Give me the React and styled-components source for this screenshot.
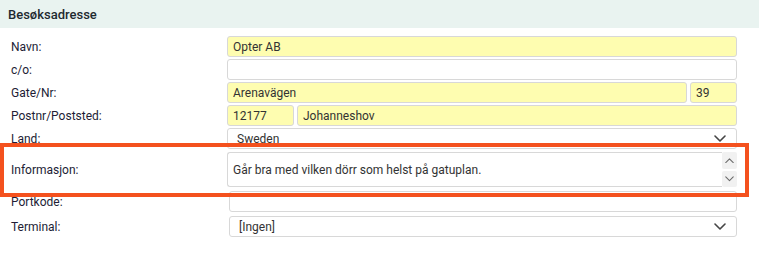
import React from "react";
import styled, { createGlobalStyle } from "styled-components";

const Global = createGlobalStyle`
  body {
    margin: 0;
    background: #ffffff;
    font-family: Roboto, "Liberation Sans", Arial, sans-serif;
  }
`;

const Chevron = ({ up, size = 12, color = "#454545", width = 1.6 }) => (
  <svg width={size} height={size / 2 + 1} viewBox="0 0 12 7" fill="none">
    <path
      d={up ? "M1 6 L6 1 L11 6" : "M1 1 L6 6 L11 1"}
      stroke={color}
      strokeWidth={width}
      strokeLinecap="round"
      strokeLinejoin="round"
    />
  </svg>
);

export default function App() {
  return (
    <Page>
      <Global />
      <Header>Besøksadresse</Header>
      <Form>
        <Row>
          <Label>Navn:</Label>
          <Fields>
            <Input $yellow defaultValue="Opter AB" readOnly />
          </Fields>
        </Row>
        <Row>
          <Label>c/o:</Label>
          <Fields>
            <Input defaultValue="" readOnly />
          </Fields>
        </Row>
        <Row>
          <Label>Gate/Nr:</Label>
          <Fields>
            <Input $yellow defaultValue="Arenavägen" readOnly />
            <Input $yellow $width="47px" defaultValue="39" readOnly />
          </Fields>
        </Row>
        <Row>
          <Label>Postnr/Poststed:</Label>
          <Fields>
            <Input $yellow $width="67px" defaultValue="12177" readOnly />
            <Input $yellow defaultValue="Johanneshov" readOnly />
          </Fields>
        </Row>
        <Row>
          <Label>Land:</Label>
          <Fields>
            <Select>
              <span>Sweden</span>
              <Chevron />
            </Select>
          </Fields>
        </Row>
        <Row $top="3px" $height="35px">
          <Label>Informasjon:</Label>
          <Fields>
            <TextArea>
              <TextBox>Går bra med vilken dörr som helst på gatuplan.</TextBox>
              <ScrollCol>
                <ScrollBtn>
                  <Chevron up size={9} color="#6a6a6a" width={1.4} />
                </ScrollBtn>
                <ScrollBtn>
                  <Chevron size={9} color="#6a6a6a" width={1.4} />
                </ScrollBtn>
              </ScrollCol>
            </TextArea>
          </Fields>
        </Row>
        <Row $top="4px">
          <Label>Portkode:</Label>
          <Fields $shift>
            <Input defaultValue="" readOnly />
          </Fields>
        </Row>
        <Row $top="4px">
          <Label>Terminal:</Label>
          <Fields $shift>
            <Select>
              <span>[Ingen]</span>
              <Chevron />
            </Select>
          </Fields>
        </Row>
        <Highlight />
      </Form>
    </Page>
  );
}

// Layout //
const Page = styled.div`
  width: 759px;
  height: 253px;
  position: relative;
  overflow: hidden;
`;
const Header = styled.div`
  height: 28px;
  background: #e9f3f0;
  padding-left: 8px;
  display: flex;
  align-items: center;
  font-size: 13px;
  font-weight: 500;
  color: #1e2a30;
  box-sizing: border-box;
`;
const Form = styled.div`
  padding-top: 8px;
  padding-right: 22px;
`;
const Row = styled.div`
  display: grid;
  grid-template-columns: 227px 1fr;
  align-items: center;
  height: ${(p) => p.$height || "21px"};
  margin-top: ${(p) => p.$top || "2px"};
  &:first-child {
    margin-top: 0;
  }
`;
const Label = styled.div`
  padding-left: 11px;
  font-size: 12px;
  color: #221d35;
`;
const Fields = styled.div`
  display: flex;
  gap: 3px;
  height: 100%;
  padding-left: ${(p) => (p.$shift ? "2px" : "0")};
`;
////////////////

// Controls //
const Input = styled.input`
  box-sizing: border-box;
  flex: ${(p) => (p.$width ? `0 0 ${p.$width}` : "1 1 auto")};
  min-width: 0;
  height: 100%;
  margin: 0;
  padding: 0 5px;
  border: 1px solid #d8d8d8;
  border-radius: 3px;
  background: ${(p) => (p.$yellow ? "#fefdb0" : "#ffffff")};
  font-family: Roboto, "Liberation Sans", Arial, sans-serif;
  font-size: 12px;
  color: #333333;
  outline: none;
`;
const Select = styled.div`
  box-sizing: border-box;
  flex: 1;
  height: 100%;
  display: flex;
  align-items: center;
  justify-content: space-between;
  padding: 0 10px 0 9px;
  border: 1px solid #d8d8d8;
  border-radius: 3px;
  font-size: 12px;
  color: #333333;
`;
const TextArea = styled.div`
  flex: 1;
  display: flex;
  height: 100%;
`;
const TextBox = styled.div`
  box-sizing: border-box;
  flex: 1;
  height: 100%;
  display: flex;
  align-items: center;
  padding: 0 5px;
  border: 1px solid #d8d8d8;
  border-right: none;
  border-radius: 3px 0 0 3px;
  font-size: 12px;
  color: #333333;
`;
const ScrollCol = styled.div`
  width: 15px;
  display: flex;
  flex-direction: column;
  gap: 2px;
`;
const ScrollBtn = styled.div`
  flex: 1;
  background: #f1f1f1;
  border-radius: 2px;
  display: flex;
  align-items: center;
  justify-content: center;
`;
/////////////////

// Annotation overlay //
const Highlight = styled.div`
  position: absolute;
  left: 0;
  top: 143px;
  width: 749px;
  height: 54px;
  box-sizing: border-box;
  border: 4px solid #f4511e;
  pointer-events: none;
`;
